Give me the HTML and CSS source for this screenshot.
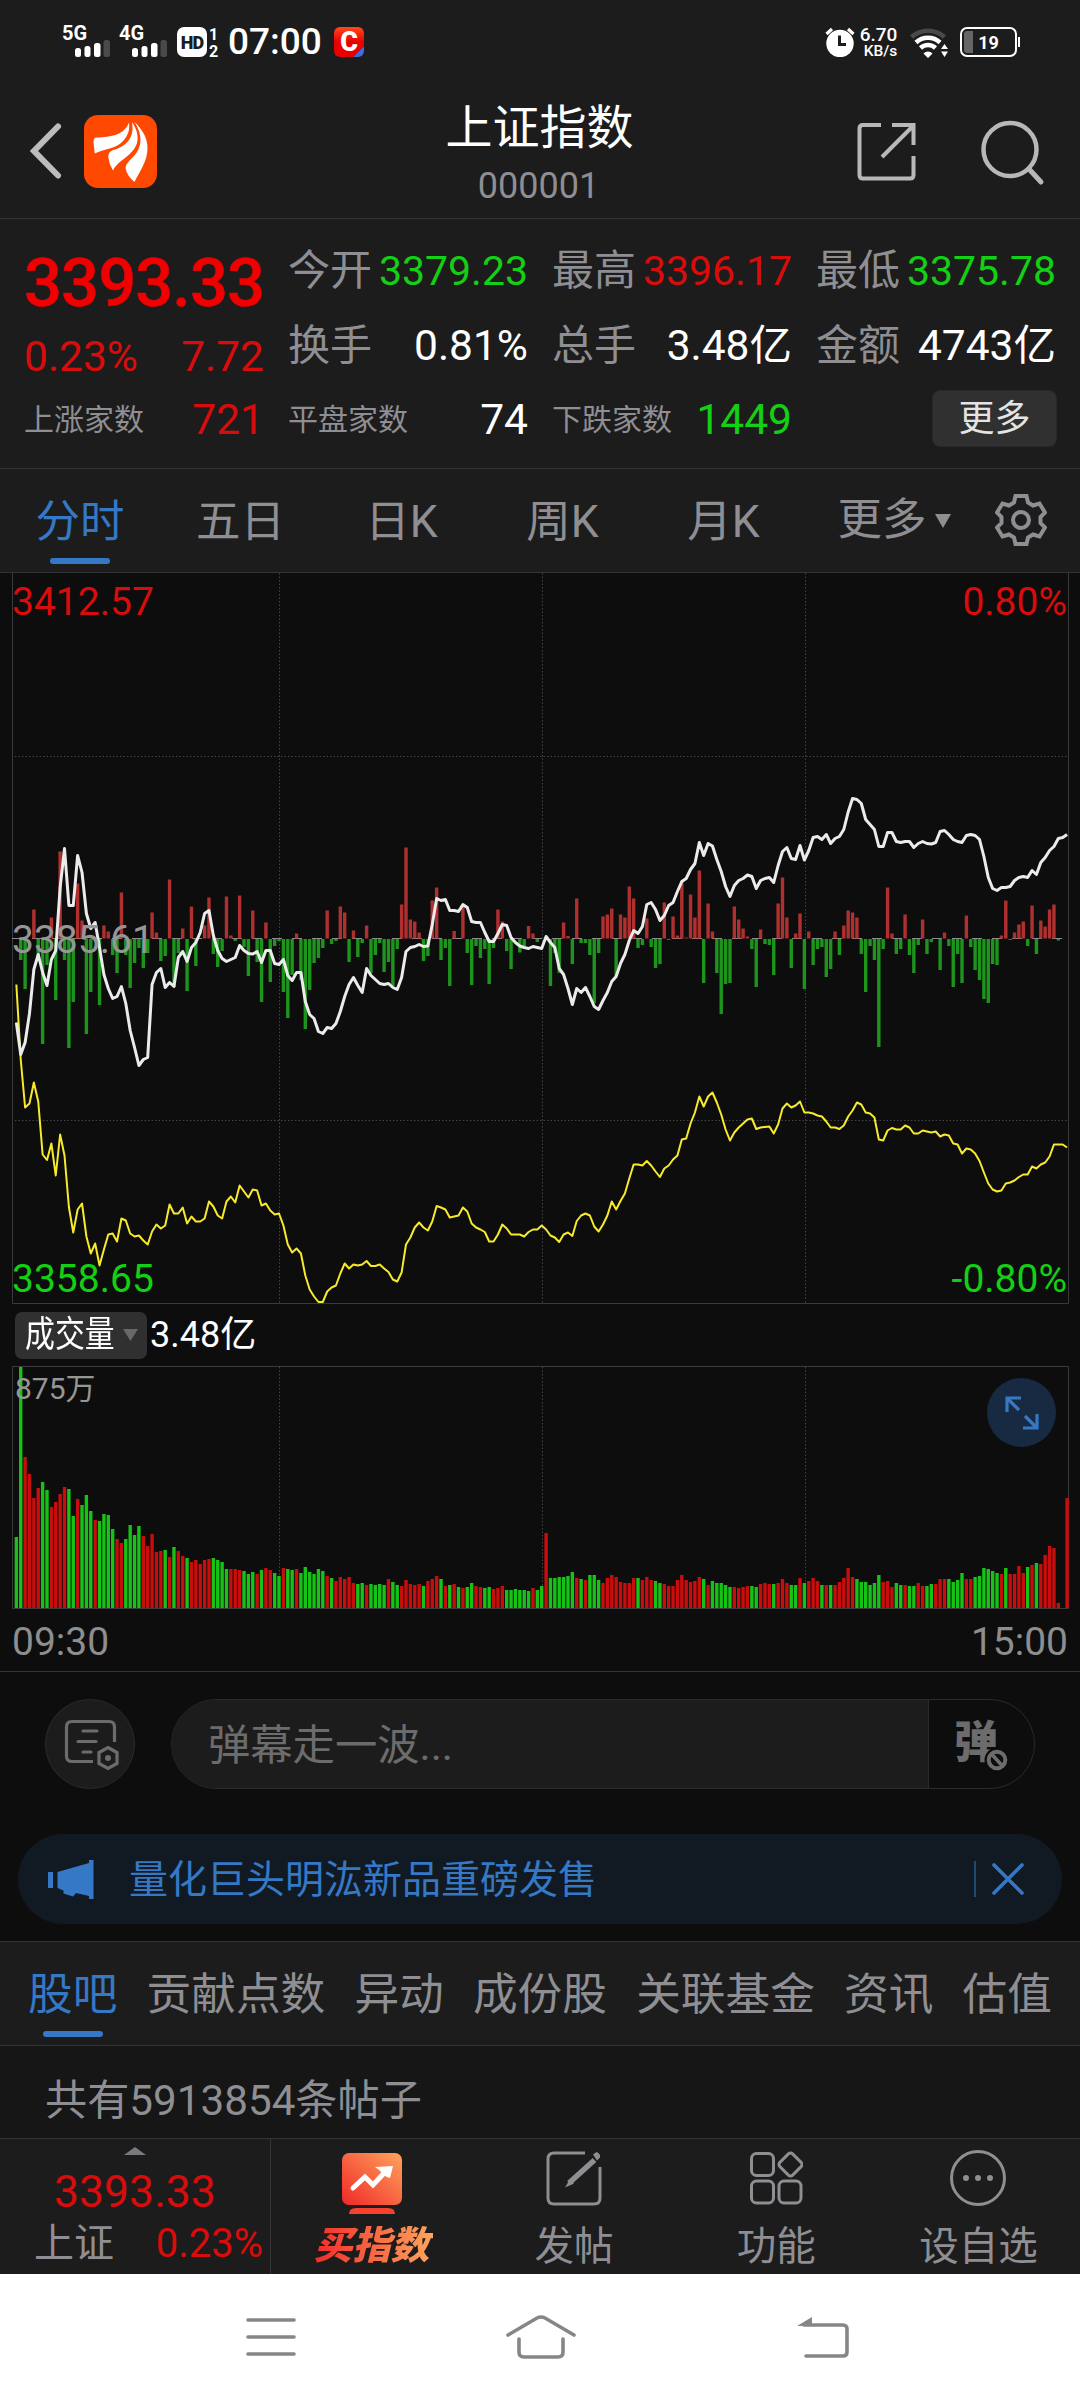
FILE: index.html
```
<!DOCTYPE html>
<html lang="zh-CN">

<head>
  <meta charset="UTF-8">
  <meta name="viewport" content="width=device-width, initial-scale=1.0">
  <title>上证指数 000001</title>
  <link rel="stylesheet" href="styles.css">
</head>

<body>
  <!-- 状态栏 -->
  <div class="status">
    <div class="signal">
      <span>5G</span>
      <svg width="36" height="17" viewBox="0 0 36 17"><rect x="0" y="8" width="6" height="9" rx="2.5"/><rect x="9.5" y="6" width="6" height="11" rx="2.5"/><rect x="19" y="3" width="6.5" height="14" rx="2.5"/><rect class="off" x="28.5" y="0" width="6.5" height="17" rx="2.5"/></svg>
    </div>
    <div class="signal">
      <span>4G</span>
      <svg width="36" height="17" viewBox="0 0 36 17"><rect x="0" y="8" width="6" height="9" rx="2.5"/><rect x="9.5" y="6" width="6" height="11" rx="2.5"/><rect x="19" y="3" width="6.5" height="14" rx="2.5"/><rect class="off" x="28.5" y="0" width="6.5" height="17" rx="2.5"/></svg>
    </div>
    <div class="hd">HD</div>
    <div class="sim"><span>1</span><span>2</span></div>
    <div class="clock">07:00</div>
    <div class="app-c">C</div>
    <div class="status-right">
      <svg width="30" height="30" viewBox="0 0 30 30">
        <circle cx="15" cy="16.5" r="13.7" fill="#fff"/>
        <path d="M1.5 7 L7 2 M28.500 7 L23 2" stroke="#fff" stroke-width="3.2"/>
        <path d="M14.500 8.500 V17.500 H21" fill="none" stroke="#1c1c1c" stroke-width="3"/>
      </svg>
      <div class="speed"><b>6.70</b><i>KB/s</i></div>
      <svg class="wifi" width="40" height="30" viewBox="0 0 40 30">
        <g fill="none" stroke="#fff" stroke-width="4.500">
          <path d="M1.500 9 A25 25 0 0 1 34.500 9" stroke="#4a4a4a"/>
          <path d="M6 14.500 A17.500 17.500 0 0 1 30 14.500"/>
          <path d="M10.500 20 A11 11 0 0 1 25.500 20"/>
        </g>
        <path d="M13.500 25.500 A6 6 0 0 1 22.500 25.500 L18 30Z M31 21 L34.500 16 L38 21Z M31 23.500 L34.500 29 L38 23.500Z" fill="#fff"/>
      </svg>
      <div class="battery"><span class="level"></span>19</div>
    </div>
  </div>

  <!-- 标题栏 -->
  <div class="navbar">
    <svg class="back" width="32" height="56" viewBox="0 0 32 56"><path d="M28 3.500 L4 28 L28 52.500" fill="none" stroke="#bcbcbc" stroke-width="6" stroke-linecap="round"/></svg>
    <svg class="logo" width="73" height="73" viewBox="0 0 73 73">
      <rect width="73" height="73" rx="14" fill="#ff4800"/>
      <path fill="#fff" d="M45 7.500 C40 20 28 22 12 22.500 Q9.500 23 9.500 27 L10.700 38.500 C20 34 30 34 37 28 C44 22 46 15 45 7.500Z"/>
      <path fill="#fff" d="M48 7 C51 24 41 32 29 35 Q24 37 24.300 42 Q25 49 29 55.500 C34 45 49 41 53 28 C55 20 52 13 48 7Z"/>
      <path fill="#fff" d="M50.500 7 C60 22 58 35 46 45 Q41.500 50 41.500 53 Q43 61 50.500 67 C56 56 64 45 63.500 32 C63 21 57 13 50.500 7Z"/>
    </svg>
    <div class="title">
      <h1>上证指数</h1>
      <p>000001</p>
    </div>
    <svg class="share" width="60" height="62" viewBox="0 0 60 62">
      <g fill="none" stroke="#b8b8b8" stroke-width="4">
        <path d="M25 4 H7 Q3.500 4 3.500 7.500 V54 Q3.500 57.500 7 57.500 H54 Q57.500 57.500 57.500 54 V35"/>
        <path d="M36 4 H57.500 V24 M57 5 L26 36"/>
      </g>
    </svg>
    <svg class="search" width="64" height="66" viewBox="0 0 64 66">
      <circle cx="29" cy="29.500" r="26.500" fill="none" stroke="#b8b8b8" stroke-width="4.500"/>
      <path d="M48 49 L60 62" stroke="#b8b8b8" stroke-width="5" stroke-linecap="round"/>
    </svg>
  </div>

  <!-- 行情 -->
  <div class="quote">
    <div class="col">
      <div class="price">3393.33</div>
      <div class="row change red"><span>0.23%</span><span>7.72</span></div>
      <div class="row small"><label>上涨家数</label><span class="red">721</span></div>
    </div>
    <div class="col">
      <div class="row first"><label>今开</label><span class="green">3379.23</span></div>
      <div class="row"><label>换手</label><span>0.81%</span></div>
      <div class="row small"><label>平盘家数</label><span>74</span></div>
    </div>
    <div class="col">
      <div class="row first"><label>最高</label><span class="red">3396.17</span></div>
      <div class="row"><label>总手</label><span>3.48亿</span></div>
      <div class="row small"><label>下跌家数</label><span class="green">1449</span></div>
    </div>
    <div class="col">
      <div class="row first"><label>最低</label><span class="green">3375.78</span></div>
      <div class="row"><label>金额</label><span>4743亿</span></div>
      <button class="more">更多</button>
    </div>
  </div>

  <!-- 周期 -->
  <div class="period">
    <a class="on">分时</a>
    <a>五日</a>
    <a>日K</a>
    <a>周K</a>
    <a>月K</a>
    <a class="drop">更多<svg width="16" height="14" viewBox="0 0 16 14"><path d="M0 0 H16 L8 14Z" fill="#8e8e93"/></svg></a>
    <span class="gear">
      <svg width="52" height="52" viewBox="0 0 52 52">
        <path d="M20.500 2 H31.500 L33 8.500 L38 11.500 L44.500 9.500 L50 18.500 L45.500 23 V29 L50 33.500 L44.500 42.500 L38 40.500 L33 43.500 L31.500 50 H20.500 L19 43.500 L14 40.500 L7.500 42.500 L2 33.500 L6.500 29 V23 L2 18.500 L7.500 9.500 L14 11.500 L19 8.500Z" fill="none" stroke="#8e8e93" stroke-width="4"/>
        <circle cx="26" cy="26" r="8" fill="none" stroke="#8e8e93" stroke-width="4"/>
      </svg>
    </span>
  </div>

  <!-- 分时图 -->
  <div class="charts">
    <svg id="price" width="1080" height="731" viewBox="0 573 1080 731">
      <g class="grid">
        <path d="M15 756.500 H1068 M15 1120.500 H1068"/>
        <path d="M279.500 573 V1303 M542.500 573 V1303 M805.500 573 V1303"/>
      </g>
      <path class="frame" d="M12.500 573 V1303.500 H1068.500 V573"/>
      <path class="zero" d="M12 938.500 H1062"/>
      <g id="diff"></g>
      <polyline id="avg" class="avg"/>
      <polyline id="now" class="now"/>
      <text x="12" y="615" class="red">3412.57</text>
      <text x="12" y="953" class="mid">3385.61</text>
      <text x="12" y="1292" class="green">3358.65</text>
      <text x="1067" y="615" class="red" text-anchor="end">0.80%</text>
      <text x="1067" y="1292" class="green" text-anchor="end">-0.80%</text>
    </svg>
    <div class="vol-head">
      <div class="vol-type"><span>成交量</span><svg width="15" height="12" viewBox="0 0 15 12"><path d="M0 0 H15 L7.500 12Z" fill="#686868"/></svg></div>
      <span class="vol-num">3.48亿</span>
    </div>
    <div class="vol">
      <svg width="1080" height="243" viewBox="0 1366 1080 243">
        <g class="grid">
          <path d="M279.500 1367 V1608 M542.500 1367 V1608 M805.500 1367 V1608"/>
        </g>
        <path class="frame" d="M12.500 1366.500 H1068.500 V1608.500 H12.500Z"/>
        <g id="vol"></g>
        <text x="15" y="1399" class="vmax">875万</text>
      </svg>
      <div class="expand">
        <svg width="34" height="34" viewBox="0 0 34 34"><path d="M2 16 V2 H16 M2 2 L14 14 M32 18 V32 H18 M32 32 L20 20" fill="none" stroke="#3478c6" stroke-width="3.200"/></svg>
      </div>
    </div>
    <div class="times"><span>09:30</span><span>15:00</span></div>
  </div>

  <!-- 弹幕 -->
  <div class="danmu">
    <div class="danmu-set">
      <svg width="56" height="52" viewBox="0 0 56 52">
        <g fill="none" stroke="#6c6c6c" stroke-width="3.200">
          <path d="M29 42.500 H8 Q2.500 42.500 2.500 37 V8 Q2.500 2.500 8 2.500 H45 Q50.500 2.500 50.500 8 V23"/>
          <path d="M19 12 H33 M14 22.500 H32 M19 33 H27" stroke-linecap="round"/>
          <path d="M44 28.500 L53 33.500 V44.500 L44 49.500 L35 44.500 V33.500Z"/>
        </g>
        <circle cx="44" cy="39" r="3" fill="#6c6c6c"/>
      </svg>
    </div>
    <div class="danmu-box">
      <div class="danmu-input">弹幕走一波...</div>
      <div class="danmu-off">
        <span>弹</span>
        <svg width="26" height="26" viewBox="0 0 26 26"><circle cx="13" cy="13" r="12.500" fill="#0d0d0d"/><circle cx="13" cy="13" r="8.300" fill="none" stroke="#6c6c6c" stroke-width="4"/><path d="M7.500 7 L18.500 19" stroke="#6c6c6c" stroke-width="3.600"/></svg>
      </div>
    </div>
  </div>

  <!-- 公告 -->
  <div class="notice">
    <svg width="46" height="40" viewBox="0 0 46 40"><path d="M0 13 H5 V29 H0Z M9.500 13 L41 4 V1 H45.500 V40 H41 V37 L28 34 L25 37.500 L15.500 34.500 V31.500 L9.500 29Z" fill="#3478c6"/></svg>
    <p>量化巨头明汯新品重磅发售</p>
    <svg class="close" width="50" height="38" viewBox="0 0 50 38"><path d="M1 1 V37" stroke="#3478c6" stroke-width="1"/><path d="M20 5 L48 33 M48 5 L20 33" stroke="#3478c6" stroke-width="3.600" stroke-linecap="round"/></svg>
  </div>

  <div class="sections">
    <a class="on">股吧</a>
    <a>贡献点数</a>
    <a>异动</a>
    <a>成份股</a>
    <a>关联基金</a>
    <a>资讯</a>
    <a>估值</a>
  </div>
  <div class="posts">共有5913854条帖子</div>

  <!-- 底部操作 -->
  <div class="toolbar">
    <div class="mini">
      <svg width="22" height="8" viewBox="0 0 22 8"><path d="M11 0 L22 8 H0Z" fill="#7a7a7e"/></svg>
      <div class="mini-price red">3393.33</div>
      <div class="mini-row"><span>上证</span><span class="red">0.23%</span></div>
    </div>
    <div class="tool buy">
      <svg width="62" height="62" viewBox="0 0 62 62">
        <defs>
          <linearGradient id="fire" x1="0" y1="1" x2="1" y2="0"><stop offset="0" stop-color="#f02828"/><stop offset="1" stop-color="#ffa45c"/></linearGradient>
        </defs>
        <rect x="1" y="0" width="60" height="52" rx="7" fill="url(#fire)"/>
        <path d="M8 61 Q8 55 15 55 H47 Q54 55 54 61Z" fill="#f5412e"/>
        <path d="M12 35 L24 24 L32 32 L44 19" fill="none" stroke="#fff" stroke-width="5" stroke-linejoin="miter" stroke-linecap="round"/>
        <path d="M34 14 L52 13 L49 25 Q44 24 41 20 Q39 17 34 14Z" fill="#fff"/>
      </svg>
      <span>买指数</span>
    </div>
    <div class="tool">
      <svg width="58" height="58" viewBox="0 0 58 58">
        <g fill="none" stroke="#8e8e93" stroke-width="3">
          <path d="M40 4 H9 Q3 4 3 10 V49 Q3 55 9 55 H49 Q55 55 55 49 V18"/>
          <path d="M49.500 11 L24 34" stroke-width="5.500"/>
        </g>
        <path d="M25 30 L20 38.500 L29 34.500Z M48 5.500 L51.500 3 Q56 5 55 8.500 L52 11.500Z" fill="#8e8e93"/>
      </svg>
      <span>发帖</span>
    </div>
    <div class="tool">
      <svg width="54" height="58" viewBox="0 0 54 58">
        <g fill="none" stroke="#8e8e93" stroke-width="3">
          <rect x="2.500" y="4.500" width="22" height="22" rx="5"/>
          <rect x="2.500" y="32" width="22" height="22" rx="5"/>
          <rect x="30" y="32" width="22" height="22" rx="5"/>
          <rect x="32.500" y="6.500" width="18" height="18" rx="3" transform="rotate(45 41.500 15.500)"/>
        </g>
      </svg>
      <span>功能</span>
    </div>
    <div class="tool">
      <svg width="58" height="58" viewBox="0 0 58 58"><circle cx="29" cy="29" r="26.500" fill="none" stroke="#8e8e93" stroke-width="3"/><g fill="#8e8e93"><circle cx="17" cy="29" r="3"/><circle cx="29" cy="29" r="3"/><circle cx="41" cy="29" r="3"/></g></svg>
      <span>设自选</span>
    </div>
  </div>

  <!-- 系统导航 -->
  <div class="sysnav">
    <svg width="52" height="44" viewBox="0 0 52 44"><path d="M3 5 H49 M3 22 H49 M3 39 H49" stroke="#868686" stroke-width="3.600" stroke-linecap="round"/></svg>
    <svg class="home" width="74" height="46" viewBox="0 0 74 46"><path d="M4 21 L33 4 Q37 2 41 4 L70 21 M15 25 V38 Q15 43 20 43 H54 Q59 43 59 38 V25" fill="none" stroke="#868686" stroke-width="3.600" stroke-linecap="round"/></svg>
    <svg width="54" height="46" viewBox="0 0 54 46"><path d="M10 42 H47 Q51 42 51 38 V15 Q51 11 47 11 H8" fill="none" stroke="#868686" stroke-width="3.600" stroke-linecap="round"/><path d="M1 12 L16 3 V12Z" fill="#868686"/></svg>
  </div>

  <script src="script.js"></script>
</body>

</html>
```

FILE: styles.css
```
* {
  box-sizing: border-box;
}

body {
  width: 1080px;
  margin: 0;
  background: #0d0d0d;
  color: #fff;
  font-family: Roboto, "Noto Sans CJK SC", sans-serif;
}

svg {
  display: block;
  flex: none;
}

h1, p {
  margin: 0;
  font-weight: 400;
}

.red {
  color: #d90c0c;
  fill: #d90c0c;
}

.green {
  color: #14d014;
  fill: #14d014;
}

/* 状态栏 */
.status {
  display: flex;
  height: 84px;
  padding: 25px 60px 0 62px;
  background: #1c1c1c;
}

.signal {
  width: 57px;
  height: 32px;
}

.signal span {
  display: block;
  height: 15px;
  font-size: 20px;
  font-weight: 700;
  line-height: 17px;
}

.signal svg {
  margin-left: 13px;
  fill: #fff;
}

.signal .off {
  fill: #4a4a4a;
}

.hd {
  width: 30px;
  height: 30px;
  margin: 2px 2px 0 1px;
  border-radius: 7px;
  background: #fff;
  color: #1c1c1c;
  font-size: 18px;
  font-weight: 900;
  line-height: 31px;
  text-align: center;
  letter-spacing: -1px;
}

.sim {
  display: flex;
  flex-direction: column;
  width: 12px;
  padding-top: 1px;
  font-size: 16px;
  font-weight: 700;
  line-height: 17px;
}

.clock {
  width: 113px;
  padding-left: 7px;
  font-size: 37px;
  font-weight: 500;
  line-height: 34px;
}

.app-c {
  width: 30px;
  height: 30px;
  margin-top: 2px;
  border-radius: 6px;
  background: linear-gradient(135deg, transparent 82%, #3c6ce0 82%), linear-gradient(#ff4a1a, #e80000 50%);
  font-size: 27px;
  font-weight: 900;
  line-height: 31px;
  text-align: center;
}

.status-right {
  display: flex;
  margin-left: auto;
  padding-top: 2px;
}

.speed {
  display: flex;
  flex-direction: column;
  width: 47px;
  align-items: center;
}

.speed b {
  font-size: 19px;
  font-weight: 500;
  line-height: 16px;
}

.speed i {
  padding-left: 4px;
  font-size: 15.5px;
  font-style: normal;
  font-weight: 500;
  line-height: 17px;
}

.wifi {
  margin: 1px 10px 0 8px;
}

.battery {
  position: relative;
  width: 57px;
  height: 30px;
  margin-right: 3px;
  border: 2px solid #fff;
  border-radius: 7px;
  font-size: 18px;
  font-weight: 700;
  line-height: 27px;
  text-align: center;
}

.battery::after {
  content: "";
  position: absolute;
  right: -5px;
  top: 8px;
  width: 2px;
  height: 10px;
  background: #fff;
}

.battery .level {
  position: absolute;
  left: 2px;
  top: 2px;
  width: 9px;
  height: 22px;
  border-radius: 3px 0 0 3px;
  background: #666;
}

/* 标题栏 */
.navbar {
  display: flex;
  align-items: flex-start;
  height: 135px;
  padding: 31px 35px 0 30px;
  border-bottom: 1px solid #343434;
  background: #1c1c1c;
}

.back {
  margin: 8px 22px 0 0;
}

.title {
  flex: 1;
  margin-top: -16px;
  padding-left: 160px;
  padding-right: 94px;
  text-align: center;
}

.title h1 {
  font-size: 47px;
  line-height: 58px;
}

.title p {
  padding-right: 2px;
  color: #8e8e93;
  font-size: 36px;
  line-height: 58px;
}

.share {
  margin: 6px 65px 0 0;
}

.search {
  margin-top: 5px;
}

/* 行情 */
.quote {
  display: grid;
  grid-template-columns: repeat(4, 240px);
  column-gap: 24px;
  height: 250px;
  padding: 14px 24px 0;
  border-bottom: 1px solid #343434;
  background: #1c1c1c;
}

.row {
  display: flex;
  align-items: center;
  justify-content: space-between;
  height: 75px;
  font-size: 42.5px;
  line-height: 60px;
  white-space: nowrap;
}

.first {
  font-size: 41px;
}

.row label {
  color: #8e8e93;
  font-size: 42px;
}

.small {
  height: 73px;
}

.small label {
  font-size: 30px;
}

.price {
  height: 98px;
  color: #f00000;
  font-size: 67px;
  font-weight: 500;
  line-height: 100px;
  letter-spacing: -1px;
  -webkit-text-stroke: 0.5px #f00000;
}

.change {
  height: 52px;
  line-height: 62px;
}

.more {
  display: block;
  width: 125px;
  height: 57px;
  margin: 7px 0 0 116px;
  padding: 0;
  border: 1px solid #282828;
  border-radius: 8px;
  background: #303030;
  color: #e4e4e4;
  font: inherit;
  font-size: 36px;
  line-height: 50px;
}

/* 周期 */
.period {
  display: grid;
  grid-template-columns: 160px repeat(5, 161px) 115px;
  grid-template-rows: 103px;
  height: 104px;
  border-bottom: 1px solid #343434;
  background: #1c1c1c;
  color: #8e8e93;
  font-size: 44.5px;
  line-height: 107px;
  text-align: center;
}

.on {
  position: relative;
  color: #3478c6;
}

.on::after {
  content: "";
  position: absolute;
  left: 50%;
  bottom: 8px;
  width: 60px;
  height: 6px;
  margin-left: -30px;
  border-radius: 3px;
  background: #3478c6;
}

.drop {
  display: flex;
  align-items: center;
  justify-content: center;
  gap: 8px;
  padding-left: 19px;
}

.gear {
  padding: 25px 0 0 30px;
}

/* 图表 */
.charts {
  border-bottom: 1px solid #343434;
}

.charts text {
  font-size: 39px;
}

.frame {
  fill: none;
  stroke: #3a3a3a;
}

.grid {
  fill: none;
  stroke: #444;
  stroke-dasharray: 1.5 2;
}

.zero {
  stroke: #8c8c8c;
  stroke-dasharray: 10 10;
}

.charts .mid, .charts .vmax {
  fill: #969696;
}

.charts .vmax {
  font-size: 30px;
}

.now, .avg {
  fill: none;
  stroke: #ebebeb;
  stroke-width: 3;
  stroke-linejoin: round;
}

.avg {
  stroke: #f7ea2c;
  stroke-width: 2;
}

.d-up { fill: #b03030; }
.d-down { fill: #1d951d; }
.v-up { fill: #c80d0d; }
.v-down { fill: #16c216; }

.vol-head {
  display: flex;
  align-items: center;
  height: 62px;
  padding-left: 15px;
}

.vol-type {
  display: flex;
  align-items: center;
  width: 132px;
  height: 47px;
  padding-left: 10px;
  border-radius: 7px;
  background: #303030;
  font-size: 36px;
  line-height: 47px;
}

.vol-type span {
  width: 98px;
  white-space: nowrap;
  transform: scaleX(0.83);
  transform-origin: 0 50%;
}

.vol-num {
  padding-left: 3px;
  font-size: 36px;
  line-height: 48px;
}

.vol {
  position: relative;
}

.expand {
  position: absolute;
  left: 987px;
  top: 12px;
  display: flex;
  align-items: center;
  justify-content: center;
  width: 69px;
  height: 69px;
  border-radius: 50%;
  background: #172a42;
}

.times {
  display: flex;
  justify-content: space-between;
  height: 62px;
  padding: 0 12px;
  color: #8e8e8e;
  font-size: 39px;
  line-height: 67px;
}

/* 弹幕 */
.danmu {
  display: flex;
  height: 162px;
  padding: 27px 45px 0;
}

.danmu-set {
  display: flex;
  align-items: center;
  justify-content: center;
  width: 90px;
  height: 90px;
  margin-right: 36px;
  padding: 2px 0 0 3px;
  border: 1px solid #2a2a2a;
  border-radius: 50%;
  background: #1c1c1c;
}

.danmu-box {
  display: flex;
  width: 864px;
  height: 90px;
  overflow: hidden;
  border: 1px solid #2a2a2a;
  border-radius: 45px;
}

.danmu-input {
  width: 757px;
  padding-left: 36px;
  border-right: 1px solid #2a2a2a;
  background: #1c1c1c;
  color: #6c6c6c;
  font-size: 42.3px;
  line-height: 91px;
}

.danmu-off {
  position: relative;
  color: #6c6c6c;
  font-size: 44px;
  font-weight: 900;
  line-height: 87px;
  padding-left: 25px;
}

.danmu-off svg {
  position: absolute;
  left: 55px;
  top: 47px;
}

/* 公告 */
.notice {
  display: flex;
  align-items: center;
  width: 1044px;
  height: 90px;
  margin: 0 18px 17px;
  padding: 0 38px 0 30px;
  border-radius: 45px;
  background: #111a23;
  color: #3478c6;
  font-size: 39px;
}

.notice p {
  margin-left: 35px;
  padding-top: 2px;
  line-height: 88px;
}

.close {
  margin-left: auto;
}

/* 栏目 */
.sections {
  display: flex;
  justify-content: space-between;
  height: 105px;
  padding: 0 28px;
  border-top: 1px solid #343434;
  border-bottom: 1px solid #343434;
  background: #1c1c1c;
  color: #8e8e93;
  font-size: 44.7px;
  line-height: 107px;
  white-space: nowrap;
}

.posts {
  height: 92px;
  padding-left: 45px;
  background: #161616;
  color: #8e8e93;
  font-size: 42.2px;
  line-height: 109px;
}

/* 底部操作 */
.toolbar {
  display: flex;
  height: 136px;
  border-top: 1px solid #343434;
  background: #1c1c1c;
  color: #8e8e93;
  font-size: 39.5px;
}

.mini {
  width: 271px;
  border-right: 1px solid #343434;
  font-size: 40px;
}

.mini svg {
  margin: 8px auto 0;
}

.mini-price {
  height: 62px;
  font-size: 44.5px;
  line-height: 74px;
  text-align: center;
}

.mini-row {
  display: flex;
  justify-content: space-between;
  padding: 0 7px 0 34px;
  line-height: 53px;
}

.tool {
  display: flex;
  flex: 1;
  flex-direction: column;
  align-items: center;
  padding: 10px 1px 0 0;
}

.tool span {
  line-height: 79px;
}

.buy {
  padding-top: 14px;
}

.buy span {
  margin-top: -9px;
  padding: 0 4px;
  background: linear-gradient(90deg, #f02828, #ffa45c);
  -webkit-background-clip: text;
  background-clip: text;
  color: transparent;
  font-size: 38.5px;
  font-weight: 900;
  font-style: italic;
}

/* 系统导航 */
.sysnav {
  display: flex;
  align-items: center;
  justify-content: space-between;
  height: 126px;
  padding: 0 230px 0 245px;
  background: #fff;
}

.home {
  margin-right: 12px;
}
```

FILE: script.js
```
// 每分钟一个点，共 241 个，数值是离零轴的高度
const now = [-84,-116,-104,-75,-31,-16,-34,-47,-21,-12,51,90,33,33,83,66,25,10,16,-9,
-36,-50,-60,-58,-48,-65,-92,-109,-127,-121,-119,-46,-34,-30,-49,-44,-48,-19,-13,-23,
-9,-4,6,25,28,3,-12,-20,-23,-21,-19,-7,-12,-15,-15.5,-13,-24,-12,-12,-25,
-26,-21,-37,-42,-34,-34,-63,-76,-80,-93,-95,-89,-90,-85,-73,-58,-46,-39,-47,-54,
-30,-37,-41,-45,-46,-45,-49,-51,-39,-13,-9,-8,-6,-8,-7.5,14,40,38,39,28,
28,27,34,31,17,16,16,6,-3,-3,5,14,13,1,-4,-7.5,-9,-10,-8,-9,
-10,2,-4,-9,-30,-36,-50,-66,-50,-54,-49,-58,-68,-71,-62,-54,-43,-38,-25,-16,
-2,8,5,12,34,36,29,18,23,33,36,47,57,60,69,75,96,83,95,92.5,
79,67,52,42,53,58,60,63.5,62,50,58,60,61,56,73,87,91,80,79,93,
78.5,88,101,102,99,104,95,100,102,109,126.5,140,139,135,119,114,109,92,92,106,
106,97,96,97,97,91,95,97,95,94.5,96,107,108,104,99,97,96,103,104,103,
99,82,61,50,48,51,51,52,58,61,62,61,68,64,76,81,88,92,100,101,104]

const avg = [-46,-121,-169,-165,-144,-163,-216,-221.5,-205,-237,-196,-217,-268.5,-294,-271,-265,-298,-315,-305,-327,
-311,-296,-295,-303,-280,-282,-295,-298,-297,-302,-306,-293,-286,-290,-287,-266,-275,-275,-269,-285,
-278,-283,-283,-280,-263,-268,-277,-280,-263,-258,-264,-247,-253,-259,-251,-252,-267,-265,-272,-276,
-275,-287,-306,-314,-310,-315,-337,-351,-358,-363.5,-363.5,-353,-349,-347,-335,-325,-330,-326,-327,-326,
-322.5,-327.5,-327.5,-326,-330,-333.5,-341,-343,-334,-306,-299,-289,-284,-289,-292,-283,-267.5,-269,-271,-279,
-278,-277,-269,-273,-285,-289,-291,-293.5,-303,-303,-296,-286,-290,-296,-296,-296,-298,-293.5,-291,-291,
-287,-291,-297,-299,-303.5,-296,-294,-297.5,-282.5,-277,-275,-277,-288,-293,-286,-277,-263,-271,-262.5,-255,
-240,-226,-226,-227,-222.5,-227,-233,-238.5,-230,-227,-221,-217,-201,-200,-185,-174,-158,-168,-158,-154,
-164,-176,-191,-202,-194,-189,-185,-181,-180,-190.5,-189,-188.5,-188,-195,-186,-170,-165,-169,-167,-163,
-174,-174,-175,-177,-178,-183,-189,-189,-190.5,-187,-178,-172,-164,-166,-174,-175,-179,-201,-202,-192,
-189.5,-191,-191,-187,-189,-195,-195,-192,-193,-194,-193,-198,-196,-197,-205,-206,-215,-210,-211,-215,
-222.5,-234,-245,-251,-253,-252,-245,-244,-242,-238.5,-236,-236,-228,-230,-226,-224,-218,-206,-206,-206,-209]

// 红绿柱
const diff = [0,-21,-50,0,29,-20,-105,-26,21,-61,87,-21,-109,-63,55,18,-95,-53,0,-66,
13,7,-16,-34,46,-16,-49,-24,-9,-29,-14,26,6,-22,-17,59,-48,-14,10,-52,
32,-27,0,13,41,-15,-28,-12,42,3,-2,43,-8,-37,28,-23,-63,16,-43,-7,
-2,-53,-79,-36,5,-41,-90,-51,-24,-19,-9,28,-5,-2,32,26,-23,8,-18,-4,
13,-34,-16,-4,-33,-23,-47,-10,34,91,19,17,6,-22,-17,38,51,-21,-9,-47,
7.5,0,33,-14,-46,-7,-19,-10,-45,-9,29,17,-12,-30,0,-13.5,-7,12.5,5,-3,
0,0,-47,-14,-34,16,2.5,-25,40,-4,-4,-16,-64,-14,22,24,30,-37,24,21,
52,40,-9,-6,20,-8,-29,-25,36,-1,22,3,57,1,44,21,68,-44,35,7,
-34,-75,-45,-44,32,19,10,2,-10,-48,9,-5,-6,-36,35,61,21,-29,5,25,
-50,7,-26,-10,-8,-38,-30,7,-16,13,28,26,21,-15,-53,-7,-21,-108,-10,51,
5,-15,-10,24,-16,-34,-6,19,-15,-3,0,-31,6,-7,-48,-15,-44,23,-8,-31,
-41,-60,-64,-25,-26,3,38,-1,6,14,17,-7,33,-15,18,12,29,34,-1.5]

// 成交量，正数红，负数绿
const vol = [-71,-241,151,134,110,120,-126,-118,101,106,114,121,-119,-92,109,-103,-113,-97,88,-87,
-94,-93,-79,69,65,-69,-83,-73,-82,72,62,74,56,57,-58,51,-61,57,52,-50,
46,48,44,48,49,-50,-48,-46,-39,39,39,38,-37,-34,-36,34,-38,40,38,-35,
-32,40,-39,-38,39,-35,-41,-36,-34,-39,-37,32,-30,27,31,29,31,25,-24,-25,
23,-24,-23,-24,-23,29,-26,-23,22,28,24,23,24,-22,27,29,32,-29,22,-23,
24,-21,20,-21,-25,22,21,-20,-21,19,20,22,-18,-18,-19,-18,-18,-17,20,-18,
-22,75,-30,-30,-31,-31,-32,-36,30,-29,28,-33,-33,-28,25,30,33,31,26,25,
25,30,-30,28,31,28,-27,-25,24,22,22,28,33,28,26,27,31,-29,23,-27,
-25,-25,-23,-21,21,20,21,22,-22,-21,24,25,24,-24,25,29,25,-23,-23,30,
-25,27,30,27,-23,23,-23,23,26,30,40,31,-29,-26,-26,-23,-25,-33,26,27,
21,-25,-23,23,-22,-22,25,22,-22,-24,24,29,29,-29,-26,-28,-35,29,29,-31,
-32,-40,-39,-37,-35,34,-40,34,34,42,35,-41,43,-45,44,53,62,60,5,0,110]

const x = i => (16.35 + i * 4.378).toFixed(2)
const line = arr => arr.map((v, i) => x(i) + ',' + (938.5 - v)).join(' ')

document.getElementById('now').setAttribute('points', line(now))
document.getElementById('avg').setAttribute('points', line(avg))

function bar(cls, i, y, h) {
  return `<rect class="${cls}" x="${(x(i) - 1.7).toFixed(2)}" y="${y}" width="3.4" height="${h}"/>`
}

document.getElementById('diff').innerHTML = diff.map((v, i) =>
  v > 0 ? bar('d-up', i, 938.5 - v, v) : bar('d-down', i, 939, -v)
).join('')

document.getElementById('vol').innerHTML = vol.map((v, i) =>
  bar(v > 0 ? 'v-up' : 'v-down', i, 1608 - Math.abs(v), Math.abs(v))
).join('')
```
